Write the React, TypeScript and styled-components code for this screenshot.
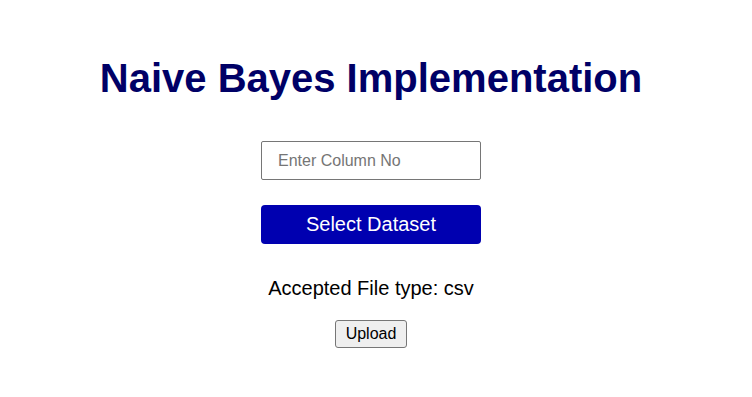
import styled, { createGlobalStyle } from 'styled-components';

const GlobalStyle = createGlobalStyle`
  body {
    margin: 0;
    background: #ffffff;
    font-family: Arial, "Liberation Sans", sans-serif;
  }
`;

const Page = styled.div`
  display: flex;
  flex-direction: column;
  align-items: center;
  padding: 56px 10px 0 0;
`;

const Title = styled.h1`
  margin: 0;
  font-size: 40px;
  font-weight: bold;
  color: #000066;
`;

const Form = styled.form`
  display: flex;
  flex-direction: column;
  align-items: center;
  margin-top: 40px;
`;

const ColumnInput = styled.input`
  box-sizing: border-box;
  width: 220px;
  height: 39px;
  padding: 0 16px;
  border: 1px solid #767676;
  border-radius: 2px;
  font-family: Arial, "Liberation Sans", sans-serif;
  font-size: 16px;
  color: #000;
  outline: none;
  &::placeholder {
    color: #757575;
  }
`;

const SelectButton = styled.label`
  box-sizing: border-box;
  display: flex;
  justify-content: center;
  align-items: center;
  width: 220px;
  height: 39px;
  margin-top: 25px;
  background: #0000b0;
  color: #ffffff;
  border-radius: 4px;
  font-size: 20px;
  cursor: pointer;
  input {
    display: none;
  }
`;

const Note = styled.p`
  margin: 33px 0 0;
  font-size: 20px;
  color: #000;
`;

const UploadButton = styled.button`
  margin-top: 20px;
  padding: 4px 10px;
  height: 28px;
  background: #efefef;
  border: 1px solid #767676;
  border-radius: 3px;
  font-family: Arial, "Liberation Sans", sans-serif;
  font-size: 16px;
  color: #000;
  line-height: 18px;
`;

export default function App() {
  return (
    <>
      <GlobalStyle />
      <Page>
        <Title>Naive Bayes Implementation</Title>
        <Form onSubmit={(e) => e.preventDefault()}>
          <ColumnInput type="text" placeholder="Enter Column No" />
          <SelectButton>
            Select Dataset
            <input type="file" accept=".csv" />
          </SelectButton>
          <Note>Accepted File type: csv</Note>
          <UploadButton type="submit">Upload</UploadButton>
        </Form>
      </Page>
    </>
  );
}
